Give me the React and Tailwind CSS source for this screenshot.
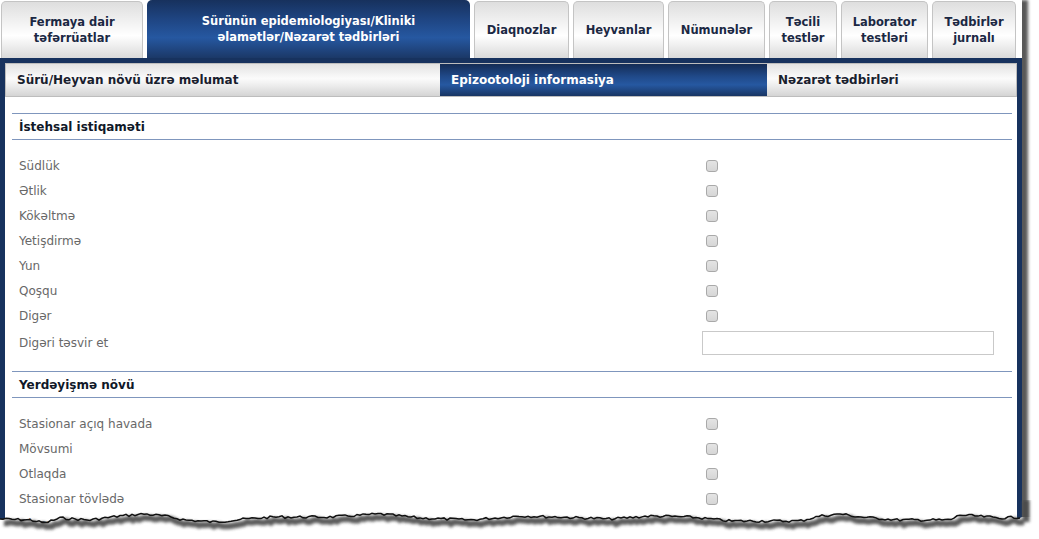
import React from "react";

const tabs = [
  { w: "w-[142px]", lines: ["Fermaya dair", "təfərrüatlar"] },
  { w: "w-[323px]", active: true, lines: ["Sürünün epidemiologiyası/Kliniki", "əlamətlər/Nəzarət tədbirləri"] },
  { w: "w-[95px]", lines: ["Diaqnozlar"] },
  { w: "w-[91px]", lines: ["Heyvanlar"] },
  { w: "w-[97px]", lines: ["Nümunələr"] },
  { w: "w-[68px]", lines: ["Təcili", "testlər"] },
  { w: "w-[87px]", lines: ["Laborator", "testləri"] },
  { w: "w-[84px]", lines: ["Tədbirlər", "jurnalı"] },
];

const section1 = ["Südlük", "Ətlik", "Kökəltmə", "Yetişdirmə", "Yun", "Qoşqu", "Digər"];
const section2 = ["Stasionar açıq havada", "Mövsumi", "Otlaqda", "Stasionar tövlədə", "Digər"];

function Checkbox() {
  return (
    <div className="ml-[4px] h-[12px] w-[12px] rounded-[3px] border border-[#a9a9a9] bg-[linear-gradient(to_bottom,#e4e4e4,#d6d6d6)]" />
  );
}

function Row({ label }) {
  return (
    <div className="grid h-[25px] grid-cols-[683px_1fr] items-center pl-[7px]">
      <span className="text-[12px] text-[#686868]">{label}</span>
      <div className="flex items-center">
        <Checkbox />
      </div>
    </div>
  );
}

function Heading({ children }) {
  return (
    <div className="flex h-[27px] items-center border-y border-[#7f96bd] pl-[7px] text-[12px] font-bold text-[#101828]">
      {children}
    </div>
  );
}

function TornEdge() {
  const keys = [
    [0, 519], [30, 520], [45, 523], [60, 518], [90, 520], [120, 516], [145, 514], [165, 516],
    [185, 520], [215, 522], [245, 519], [275, 517], [330, 517], [380, 514], [420, 518],
    [470, 520], [520, 516], [560, 517], [610, 519], [650, 516], [690, 517], [730, 521],
    [760, 521], [800, 521], [820, 516], [840, 514], [860, 517], [900, 520], [950, 520],
    [960, 515], [975, 516], [1000, 518], [1022, 517],
  ];
  let seed = 7;
  const rnd = () => {
    seed = (seed * 9301 + 49297) % 233280;
    return seed / 233280;
  };
  const pts = [];
  for (let x = 0; x <= 1022; x += 3) {
    let i = 0;
    while (i < keys.length - 2 && keys[i + 1][0] < x) i++;
    const [x0, y0] = keys[i];
    const [x1, y1] = keys[i + 1];
    const t = Math.min(1, Math.max(0, (x - x0) / (x1 - x0)));
    const y = y0 + (y1 - y0) * t + (rnd() - 0.5) * 2.6;
    pts.push([x, y - 500]);
  }
  const line = pts.map((p, i) => `${i ? "L" : "M"}${p[0]},${p[1].toFixed(1)}`).join(" ");
  const fill = `${line} L1022,17 L1039,17 L1039,39 L0,39 Z`;
  return (
    <svg className="absolute left-0 top-[500px]" width="1039" height="39" viewBox="0 0 1039 39">
      <defs>
        <filter id="blur" x="-5%" y="-50%" width="110%" height="200%">
          <feGaussianBlur stdDeviation="1.8" />
        </filter>
      </defs>
      <path d={fill} fill="#ffffff" />
      <g filter="url(#blur)" opacity="0.9">
        <path d={line} transform="translate(4,4)" fill="none" stroke="#4a4a4a" strokeWidth="6" />
        <path d="M1026,0 L1026,22" fill="none" stroke="#4a4a4a" strokeWidth="7" />
      </g>
      <path d={line} fill="none" stroke="#111" strokeWidth="1.5" />
    </svg>
  );
}

export default function App() {
  return (
    <div className="relative h-[539px] w-[1039px] overflow-hidden bg-white font-['DejaVu_Sans',sans-serif]">
      <div className="w-[1022px] bg-white shadow-[6px_0_3px_rgba(0,0,0,0.65)]">
        <div className="flex h-[58px] items-end gap-[4px] pl-[1px]">
          {tabs.map((t, i) =>
            t.active ? (
              <div
                key={i}
                className={`${t.w} flex h-[58px] flex-col items-center justify-center rounded-t-[5px] bg-[linear-gradient(to_bottom,#17315d,#1f4684_35%,#2658a1_65%,#1b3867)] text-center text-[11.5px] font-bold leading-[16px] text-white`}
              >
                {t.lines.map((l) => (
                  <span key={l}>{l}</span>
                ))}
              </div>
            ) : (
              <div
                key={i}
                className={`${t.w} flex h-[57px] flex-col items-center justify-center rounded-t-[5px] border border-b-0 border-[#c4c4c4] bg-[linear-gradient(to_bottom,#dedede,#f4f4f4_40%,#ffffff_60%,#dadada)] text-center text-[11.5px] font-bold leading-[16px] text-[#1b2843]`}
              >
                {t.lines.map((l) => (
                  <span key={l}>{l}</span>
                ))}
              </div>
            )
          )}
        </div>
        <div className="bg-[#17325e] pl-[5px] pr-[5px] pt-[5px]">
          <div className="flex h-[34px] border border-[#bdbdbd] text-[12px] font-bold">
            <div className="flex w-[434px] items-center bg-[linear-gradient(to_bottom,#e2e2e2,#fbfbfb_45%,#f2f2f2_60%,#d4d4d4)] pl-[11px] text-[#18202e]">
              Sürü/Heyvan növü üzrə məlumat
            </div>
            <div className="flex w-[327px] items-center bg-[linear-gradient(to_bottom,#142c55,#204a8a_40%,#2658a1_65%,#183563)] pl-[11px] text-white">
              Epizootoloji informasiya
            </div>
            <div className="flex flex-1 items-center bg-[linear-gradient(to_bottom,#e2e2e2,#fbfbfb_45%,#f2f2f2_60%,#d4d4d4)] pl-[11px] text-[#18202e]">
              Nəzarət tədbirləri
            </div>
          </div>
          <div className="bg-white pb-[40px] pl-[7px] pr-[5px] pt-[16px]">
            <Heading>İstehsal istiqaməti</Heading>
            <div className="pt-[13px]">
              {section1.map((l) => (
                <Row key={l} label={l} />
              ))}
              <div className="mt-[3px] grid h-[24px] grid-cols-[683px_1fr] items-center pl-[7px]">
                <span className="text-[12px] text-[#686868]">Digəri təsvir et</span>
                <div className="h-[24px] w-[292px] border border-[#c9c9c9] bg-white" />
              </div>
            </div>
            <div className="mt-[16px]">
              <Heading>Yerdəyişmə növü</Heading>
            </div>
            <div className="pt-[13px]">
              {section2.map((l, i) => (
                <Row key={l + i} label={l} />
              ))}
            </div>
          </div>
        </div>
      </div>
      <TornEdge />
    </div>
  );
}
